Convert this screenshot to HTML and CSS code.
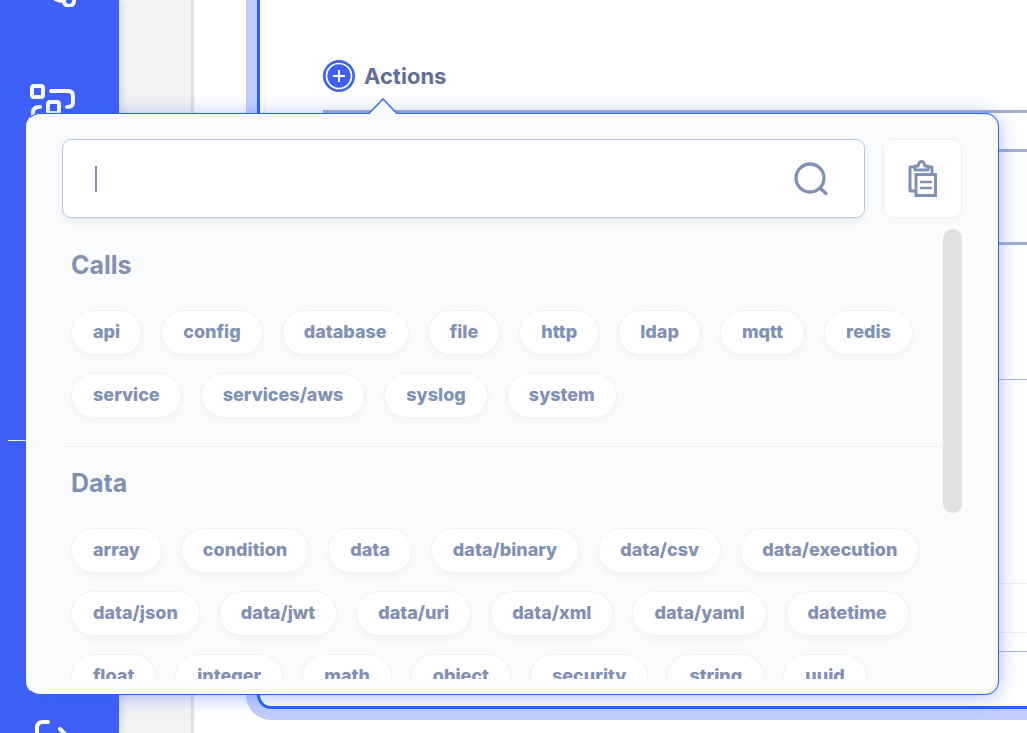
FILE: index.html
```html
<!DOCTYPE html>
<html lang="en">
<head>
<meta charset="utf-8">
<meta name="viewport" content="width=device-width, initial-scale=1">
<title>Actions</title>
<link rel="stylesheet" href="styles.css">
</head>
<body>
<div class="app">
  <nav class="sidebar" aria-label="Main">
    <a class="nav-link nav-share" href="#" aria-label="Share">
      <svg width="46" height="34" viewBox="0 0 46 34" fill="none" stroke="#fff" stroke-width="4" stroke-linecap="round"><circle cx="39" cy="28" r="5"/><path d="M24 25q4 3 10 3"/><circle cx="8" cy="18" r="5"/></svg>
    </a>
    <a class="nav-link nav-flow" href="#" aria-label="Flows">
      <svg width="46" height="46" viewBox="0 0 46 46" fill="none" stroke="#fff" stroke-width="4" stroke-linecap="round"><rect x="2" y="2" width="11" height="11" rx="2"/><rect x="18" y="18" width="11" height="11" rx="2"/><path d="M21 7h17q5 0 5 5v6q0 5-5 5h-1M10 23H9q-6 0-6 6v8"/></svg>
    </a>
    <hr class="nav-rule">
    <a class="nav-link nav-exit" href="#" aria-label="Log out">
      <svg width="40" height="40" viewBox="0 0 40 40" fill="none" stroke="#fff" stroke-width="4" stroke-linecap="round" stroke-linejoin="round"><path d="M14 2H9Q3 2 3 8v22q0 6 6 6h5M26 9l10 10-10 10M14 19h22"/></svg>
    </a>
  </nav>
  <div class="rail"></div>
  <main class="main">
    <section class="card">
      <header class="card-head">
        <button class="add" type="button" aria-label="Add action">
          <svg width="32" height="32" viewBox="0 0 32 32"><circle cx="16" cy="16" r="16" fill="#3e60f8"/><circle cx="16" cy="16" r="12.5" fill="none" stroke="#fff" stroke-width="1.7"/><path d="M10 16h12M16 10v12" fill="none" stroke="#fff" stroke-width="2"/></svg>
        </button>
        <h1 class="title">Actions</h1>
      </header>
      <div class="rows">
        <div class="row row-head"></div>
        <div class="row row-shaded"></div>
        <div class="row row-body"></div>
        <div class="row row-large"></div>
        <div class="row row-small"></div>
        <div class="row row-last"></div>
      </div>
    </section>
  </main>
</div>

<div class="popover" role="dialog" aria-label="Add action">
  <svg class="pointer" width="30" height="17" viewBox="0 0 30 17"><path d="M1 16 15 1l14 15v1H1z" fill="#fafbfd"/><path d="M1 15.500 15 1 29 15.500" fill="none" stroke="#3b6cf0" stroke-width="1.500"/></svg>
  <div class="tools">
    <label class="search">
      <span class="caret"></span>
      <input class="search-input" type="text" aria-label="Search actions">
      <svg width="36" height="36" viewBox="0 0 36 36" fill="none" stroke="#8091b5" stroke-width="3.300" stroke-linecap="round"><circle cx="17" cy="17" r="14"/><path d="m27 27 6 5.500"/></svg>
    </label>
    <button class="paste" type="button" aria-label="Paste">
      <svg width="30" height="38" viewBox="0 0 30 38" fill="none" stroke="#8091b5" stroke-width="3" stroke-linejoin="round"><path d="M7 31H2V7h4M19 7h5v7"/><path d="M7 10V6h3q1-4.500 3.500-4.500T17 6h3v4z"/><path d="M8 14.500h19.500v21H8z" stroke-linejoin="miter"/><path d="M13 22h10M13 28h10" stroke-linecap="round" stroke-width="2.500"/></svg>
    </button>
  </div>
  <div class="results">
    <div class="list">
      <section class="group">
        <h2 class="group-title">Calls</h2>
        <div class="chips">
          <button class="chip" type="button">api</button>
          <button class="chip" type="button">config</button>
          <button class="chip" type="button">database</button>
          <button class="chip" type="button">file</button>
          <button class="chip" type="button">http</button>
          <button class="chip" type="button">ldap</button>
          <button class="chip" type="button">mqtt</button>
          <button class="chip" type="button">redis</button>
          <button class="chip" type="button">service</button>
          <button class="chip" type="button">services/aws</button>
          <button class="chip" type="button">syslog</button>
          <button class="chip" type="button">system</button>
        </div>
      </section>
      <section class="group">
        <h2 class="group-title">Data</h2>
        <div class="chips">
          <button class="chip" type="button">array</button>
          <button class="chip" type="button">condition</button>
          <button class="chip" type="button">data</button>
          <button class="chip" type="button">data/binary</button>
          <button class="chip" type="button">data/csv</button>
          <button class="chip" type="button">data/execution</button>
          <button class="chip" type="button">data/json</button>
          <button class="chip" type="button">data/jwt</button>
          <button class="chip" type="button">data/uri</button>
          <button class="chip" type="button">data/xml</button>
          <button class="chip" type="button">data/yaml</button>
          <button class="chip" type="button">datetime</button>
          <button class="chip" type="button">float</button>
          <button class="chip" type="button">integer</button>
          <button class="chip" type="button">math</button>
          <button class="chip" type="button">object</button>
          <button class="chip" type="button">security</button>
          <button class="chip" type="button">string</button>
          <button class="chip" type="button">uuid</button>
        </div>
      </section>
    </div>
    <div class="scrollbar"><div class="thumb"></div></div>
  </div>
</div>
</body>
</html>
```
FILE: styles.css
```css
* {
  box-sizing: border-box;
}

body {
  margin: 0;
  font-family: Inter, "Liberation Sans", sans-serif;
  background: #fff;
  color: #8091b5;
  overflow: hidden;
}

button {
  font: inherit;
  color: inherit;
  padding: 0;
  border: 0;
  background: none;
}

svg {
  display: block;
  flex: none;
}

.app {
  display: flex;
  height: 100vh;
  overflow: hidden;
}

/* Sidebar */
.sidebar {
  flex: none;
  display: flex;
  flex-direction: column;
  width: 119px;
  background: #3e60f8;
  box-shadow: 0 0 10px rgba(62, 96, 248, 0.3);
  z-index: 1;
}

.nav-link {
  display: block;
  flex: none;
  padding-left: 30px;
}

.nav-share {
  margin-top: -27px;
}

.nav-flow {
  margin-top: 77px;
}

.nav-rule {
  width: 103px;
  margin: 310px 8px 0;
  border: 0;
  border-top: 1px solid #fff;
}

.nav-exit {
  margin-top: 279px;
  padding-left: 34px;
}

.rail {
  flex: none;
  width: 75px;
  background: #f3f3f3;
  border-right: 3px solid #e0e0e0;
}

/* Main card */
.main {
  flex: 1;
  min-width: 0;
  padding-left: 63px;
  padding-bottom: 24px;
  display: flex;
}

.card {
  flex: 1;
  margin: -20px -40px 0 0;
  padding: 74px 0 0 63px;
  border: 3px solid #2962fb;
  border-radius: 14px;
  box-shadow: 0 0 0 11px #c3cefc;
}

.card-head {
  display: flex;
  align-items: center;
  gap: 9px;
  height: 38px;
}

.title {
  margin: 0;
  font-size: 22px;
  line-height: 32px;
  font-weight: 700;
  color: #60709a;
}

.rows {
  margin-top: 15px;
  border-top: 3px solid #a1afd0;
}

.row-head {
  height: 39px;
  border-bottom: 3px solid #a1afd0;
}

.row-shaded {
  height: 93px;
  background: #fafbfd;
  border-bottom: 3px solid #a1afd0;
}

.row-body {
  height: 135px;
  border-bottom: 1px solid #b4bad3;
}

.row-large {
  height: 204px;
  border-bottom: 1px solid #ececf3;
}

.row-small {
  height: 49px;
  border-bottom: 1px solid #ececf3;
}

.row-last {
  height: 19px;
  border-bottom: 1px solid #b4bad3;
}

/* Popover */
.popover {
  position: absolute;
  z-index: 2;
  top: 113px;
  left: 26px;
  right: 28px;
  display: flex;
  flex-direction: column;
  gap: 11px;
  padding: 25px 36px 15px 35px;
  background: #fafbfd;
  border: 1px solid #2962fb;
  border-left-color: #fafbfd;
  border-radius: 14px;
  box-shadow: 0 2px 20px rgba(41, 98, 251, 0.4);
}

.pointer {
  position: absolute;
  top: -16px;
  left: 341px;
}

.tools {
  display: flex;
  gap: 18px;
}

.search {
  flex: 1;
  display: flex;
  align-items: center;
  height: 79px;
  padding: 0 35px 0 32px;
  background: #fff;
  border: 1px solid #bac5dc;
  border-radius: 9px;
  box-shadow: 0 4px 10px rgba(0, 0, 0, 0.06);
}

.caret {
  width: 2px;
  height: 26px;
  background: #8091b5;
}

.search-input {
  flex: 1;
  min-width: 0;
  border: 0;
  outline: 0;
  background: none;
  font: 600 20px/28px Inter, "Liberation Sans", sans-serif;
  color: #8091b5;
}

.paste {
  display: flex;
  align-items: center;
  justify-content: center;
  width: 79px;
  height: 79px;
  background: #fff;
  border: 1px solid #f0f1f5;
  border-radius: 9px;
  box-shadow: 0 4px 10px rgba(0, 0, 0, 0.02);
}

.results {
  display: flex;
  height: 450px;
}

.list {
  flex: 1;
  overflow: hidden;
}

.group {
  padding: 20px 9px 28px;
  border-bottom: 1px solid #eff0f4;
}

.group-title {
  margin: 0 0 29px;
  font-size: 25px;
  line-height: 32px;
  font-weight: 700;
}

.chips {
  display: flex;
  flex-wrap: wrap;
  gap: 18px 19px;
}

.chip {
  height: 45px;
  padding: 0 21px 2px;
  font-size: 18px;
  line-height: 24px;
  font-weight: 800;
  background: #fff;
  border: 1px solid #f1f2f6;
  border-radius: 23px;
  box-shadow: 0 4px 8px rgba(0, 0, 0, 0.03);
}

.scrollbar {
  flex: none;
  width: 19px;
}

.thumb {
  height: 284px;
  border-radius: 10px;
  background: #e1e1e1;
}
```
